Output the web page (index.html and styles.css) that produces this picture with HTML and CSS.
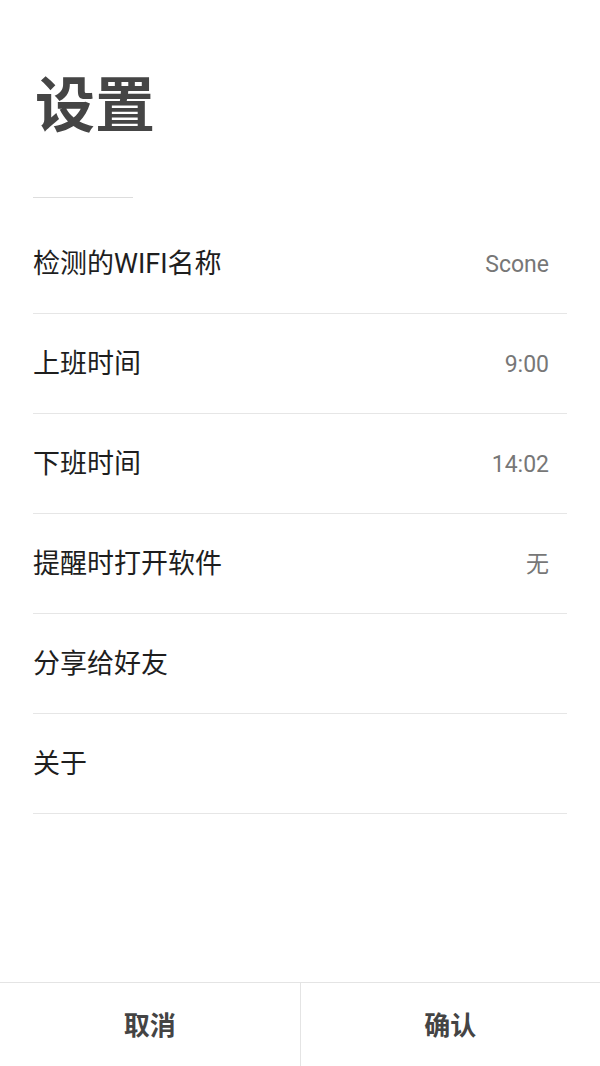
FILE: index.html
```html
<!DOCTYPE html>
<html lang="zh-CN">
<head>
  <meta charset="UTF-8">
  <title>设置</title>
  <link rel="stylesheet" href="styles.css">
</head>
<body>

  <div class="page">
    <h1 class="title">设置</h1>
    <div class="title-line"></div>

    <ul class="settings">
      <li class="row">
        <span class="label">检测的WIFI名称</span>
        <span class="value">Scone</span>
      </li>
      <li class="row">
        <span class="label">上班时间</span>
        <span class="value">9:00</span>
      </li>
      <li class="row">
        <span class="label">下班时间</span>
        <span class="value">14:02</span>
      </li>
      <li class="row">
        <span class="label">提醒时打开软件</span>
        <span class="value">无</span>
      </li>
      <li class="row">
        <span class="label">分享给好友</span>
      </li>
      <li class="row">
        <span class="label">关于</span>
      </li>
    </ul>
  </div>

  <div class="actions">
    <button class="action">取消</button>
    <button class="action">确认</button>
  </div>

</body>
</html>
```

FILE: styles.css
```css
html, body {
  height: 100%;
}

body {
  font-family: Roboto, 'Noto Sans CJK SC', sans-serif;
  background: #fff;
  color: #212121;
  margin: 0;
  display: flex;
  flex-direction: column;
}

.page {
  flex: 1;
  padding: 0 33px;
}

.title {
  margin: 77px 0 0 2px;
  font-size: 60px;
  line-height: 60px;
  font-weight: bold;
  color: #454545;
}

.title-line {
  width: 100px;
  height: 1px;
  background: #ddd;
  margin-top: 60px;
}

.settings {
  list-style: none;
  margin: 16px 0 0;
  padding: 0;
}

.row {
  display: flex;
  align-items: center;
  justify-content: space-between;
  height: 99px;
  border-bottom: 1px solid #e6e6e6;
  padding-right: 18px;
}

.label {
  font-size: 27px;
  line-height: 32px;
  color: #1e1e1e;
}

.value {
  font-size: 23px;
  line-height: 28px;
  padding-top: 3px;
  color: #777;
}

.actions {
  display: flex;
  height: 83px;
  border-top: 1px solid #e4e4e4;
}

.action {
  flex: 1;
  border: none;
  background: #fff;
  font-family: Roboto, 'Noto Sans CJK SC', sans-serif;
  font-size: 26px;
  font-weight: bold;
  color: #444;
  padding: 0 0 3px;
  cursor: pointer;
}

.action:first-child {
  border-right: 1px solid #e4e4e4;
}
```
